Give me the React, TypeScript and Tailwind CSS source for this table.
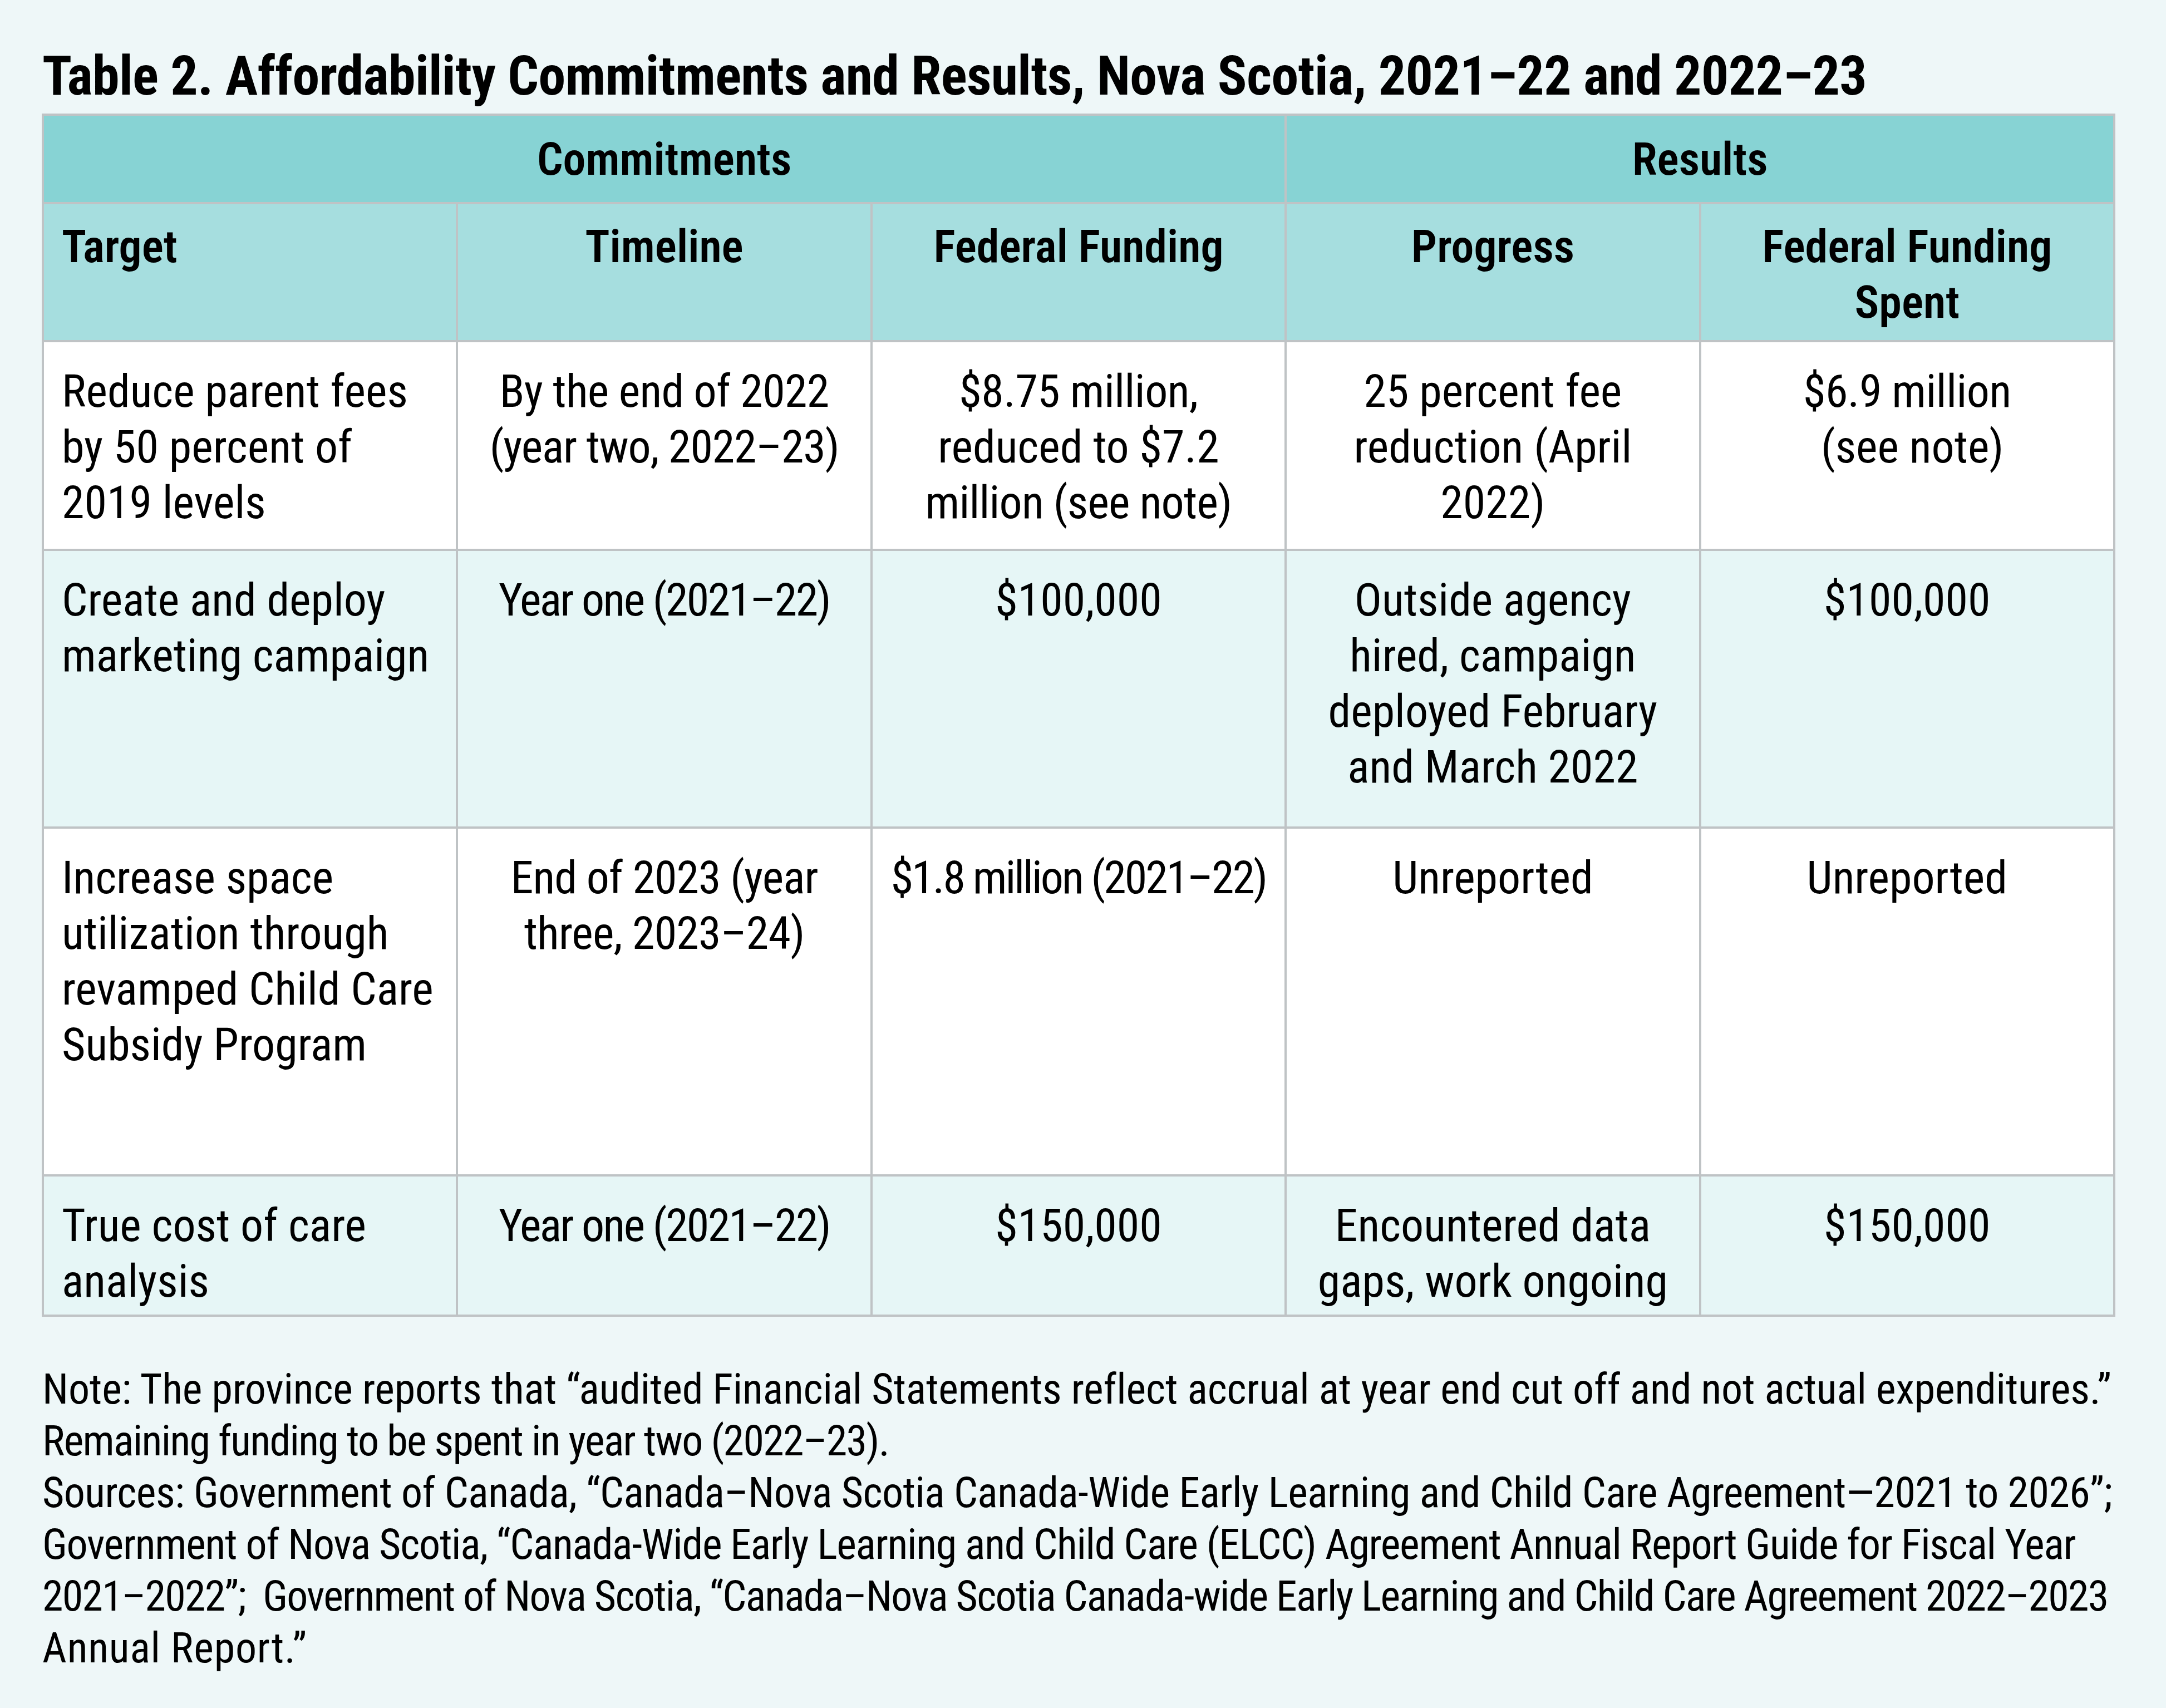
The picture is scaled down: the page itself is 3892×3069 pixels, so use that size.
import React from "react";

type Line = string | [string, string];
type Cell = { lines: Line[]; align: "left" | "center" };

const rows: { bg: string; cells: Cell[] }[] = [
  {
    bg: "bg-white",
    cells: [
      { lines: ["Reduce parent fees", "by 50 percent of", "2019 levels"], align: "left" },
      { lines: [["By the end of 2022", "tracking-[-0.7px]"], ["(year two, 2022–23)", "tracking-[-1.2px]"]], align: "center" },
      { lines: [["$8.75 million,", "tracking-[-0.5px]"], "reduced to $7.2", ["million (see note)", "tracking-[-0.8px]"]], align: "center" },
      { lines: ["25 percent fee", "reduction (April", "2022)"], align: "center" },
      { lines: [["$6.9 million", "tracking-[-0.5px]"], "\u00a0(see note)"], align: "center" },
    ],
  },
  {
    bg: "bg-[#e6f6f6]",
    cells: [
      { lines: ["Create and deploy", "marketing campaign"], align: "left" },
      { lines: [["Year one (2021–22)", "tracking-[-2.6px]"]], align: "center" },
      { lines: ["$100,000"], align: "center" },
      { lines: ["Outside agency", "hired, campaign", "deployed February", "and March 2022"], align: "center" },
      { lines: ["$100,000"], align: "center" },
    ],
  },
  {
    bg: "bg-white",
    cells: [
      { lines: ["Increase space", "utilization through", "revamped Child Care", "Subsidy Program"], align: "left" },
      { lines: [["End of 2023 (year", "tracking-[-1px]"], ["three, 2023–24)", "tracking-[-0.8px]"]], align: "center" },
      { lines: [["$1.8 million (2021–22)", "tracking-[-3px]"]], align: "center" },
      { lines: ["Unreported"], align: "center" },
      { lines: ["Unreported"], align: "center" },
    ],
  },
  {
    bg: "bg-[#e6f6f6]",
    cells: [
      { lines: ["True cost of care", "analysis"], align: "left" },
      { lines: [["Year one (2021–22)", "tracking-[-2.6px]"]], align: "center" },
      { lines: ["$150,000"], align: "center" },
      { lines: ["Encountered data", "gaps, work ongoing"], align: "center" },
      { lines: ["$150,000"], align: "center" },
    ],
  },
];

const subHeaders: Cell[] = [
  { lines: ["Target"], align: "left" },
  { lines: ["Timeline"], align: "center" },
  { lines: ["Federal Funding"], align: "center" },
  { lines: ["Progress"], align: "center" },
  { lines: ["Federal Funding", "Spent"], align: "center" },
];

const notes: [string, string][] = [
  ["Note: The province reports that “audited Financial Statements reflect accrual at year end cut off and not actual expenditures.”", "tracking-[-0.2px]"],
  ["Remaining funding to be spent in year two (2022–23).", "tracking-[-1.7px]"],
  ["Sources: Government of Canada, “Canada–Nova Scotia Canada-Wide Early Learning and Child Care Agreement—2021 to 2026”;", "tracking-[-0.6px]"],
  ["Government of Nova Scotia, “Canada-Wide Early Learning and Child Care (ELCC) Agreement Annual Report Guide for Fiscal Year", "tracking-[-1.3px]"],
  ["2021–2022”;\u00a0 Government of Nova Scotia, “Canada–Nova Scotia Canada-wide Early Learning and Child Care Agreement 2022–2023", "tracking-[-1.8px]"],
  ["Annual Report.”", "tracking-[0.8px]"],
];

function Lines({ lines }: { lines: Line[] }) {
  return (
    <>
      {lines.map((l, i) => {
        const [text, track] = typeof l === "string" ? [l, ""] : l;
        return (
          <span key={i} className={`block whitespace-nowrap ${track}`}>
            {text}
          </span>
        );
      })}
    </>
  );
}

export default function App() {
  return (
    <div className="min-h-[3069px] w-full bg-[#eef7f8] pl-[75px] pr-[91px] pt-[79px] font-['Roboto_Condensed',Roboto,sans-serif] text-black">
      <h1 className="mb-[9px] whitespace-nowrap pl-px text-[98px] font-bold leading-[116px] tracking-[-0.65px]">
        Table 2. Affordability Commitments and Results, Nova Scotia, 2021–22 and 2022–23
      </h1>

      <div className="grid w-[3726px] grid-cols-5 grid-rows-[155px_244px_371px_495px_621px_248px] gap-[4px] border-[4px] border-[#bfc3c5] bg-[#bfc3c5] text-[82px] leading-[100px]">
        <div className="col-span-3 flex items-center justify-center bg-[#87d3d4] font-semibold">
          Commitments
        </div>
        <div className="col-span-2 flex items-center justify-center bg-[#87d3d4] font-semibold">
          Results
        </div>

        {subHeaders.map((c, i) => (
          <div
            key={i}
            className={`bg-[#a6dedf] px-[32px] pt-[26px] font-semibold ${c.align === "left" ? "text-left" : "text-center"}`}
          >
            <Lines lines={c.lines} />
          </div>
        ))}

        {rows.map((r, ri) =>
          r.cells.map((c, ci) => (
            <div
              key={`${ri}-${ci}`}
              className={`${r.bg} px-[24px] pt-[38px] ${c.align === "left" ? "pl-[32px] text-left" : "text-center"}`}
            >
              <Lines lines={c.lines} />
            </div>
          ))
        )}
      </div>

      <div className="mt-[84px] pl-px text-[76px] leading-[93px]">
        {notes.map(([n, t], i) => (
          <p key={i} className={`whitespace-nowrap ${t}`}>
            {n}
          </p>
        ))}
      </div>
    </div>
  );
}
